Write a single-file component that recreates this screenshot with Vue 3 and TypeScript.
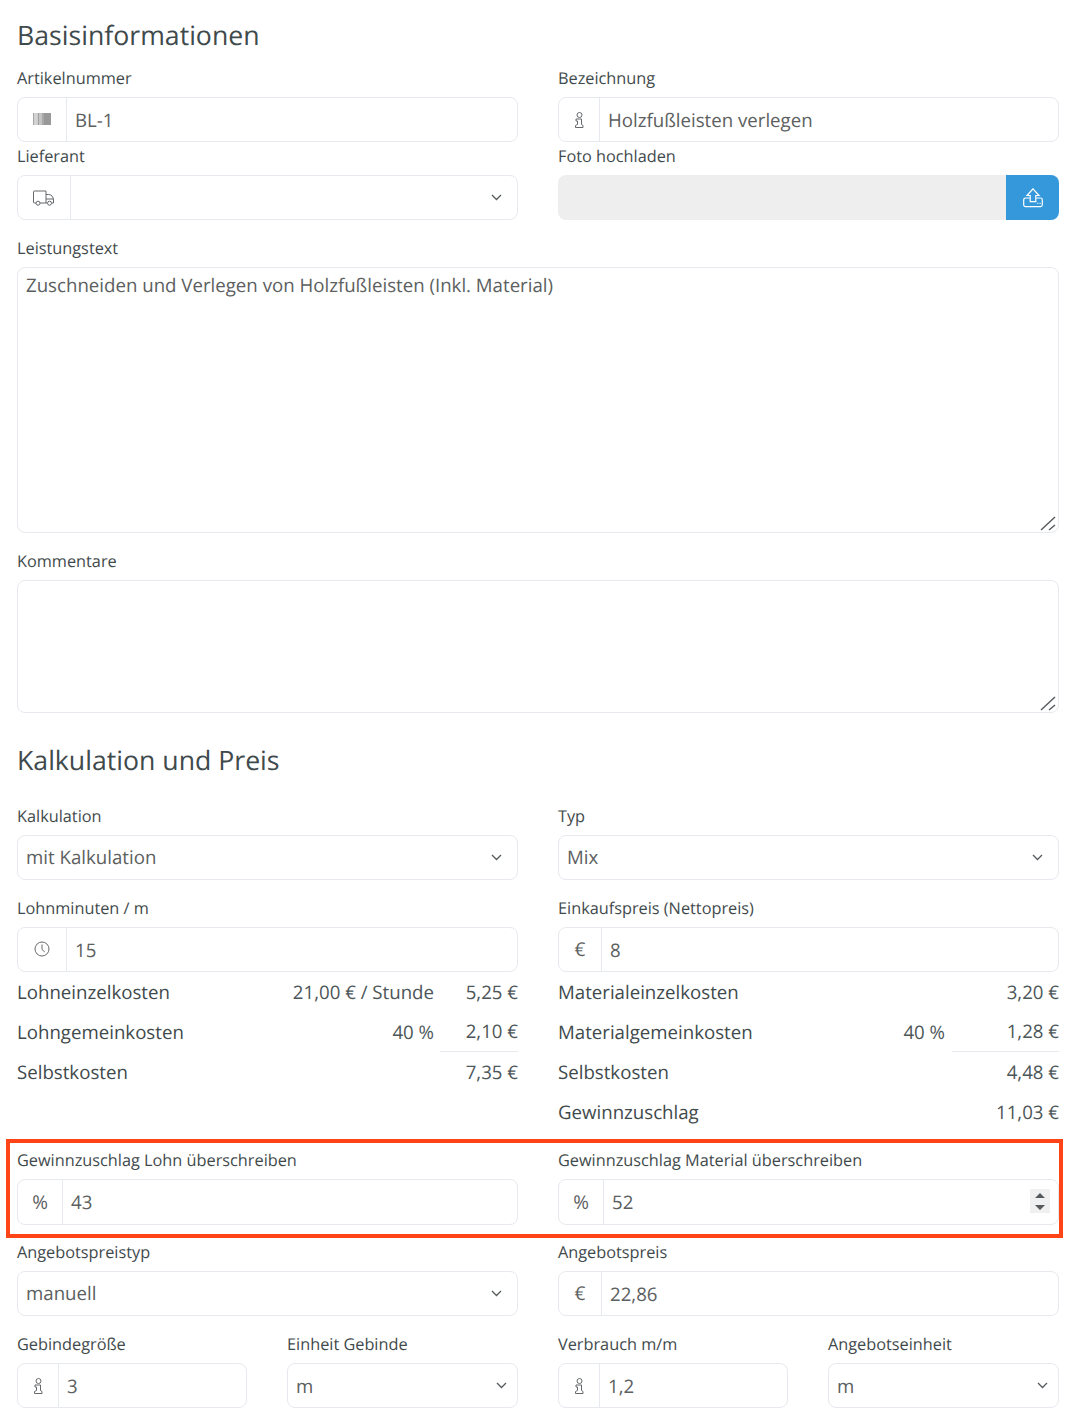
<script setup lang="ts">
const costL = [
  { l: 'Lohneinzelkosten', m: '21,00 € / Stunde', v: '5,25 €' },
  { l: 'Lohngemeinkosten', m: '40 %', v: '2,10 €', rule: true },
  { l: 'Selbstkosten', m: '', v: '7,35 €' },
]
const costR = [
  { l: 'Materialeinzelkosten', m: '', v: '3,20 €' },
  { l: 'Materialgemeinkosten', m: '40 %', v: '1,28 €', rule: true },
  { l: 'Selbstkosten', m: '', v: '4,48 €' },
  { l: 'Gewinnzuschlag', m: '', v: '11,03 €' },
]
</script>

<template>
  <main class="page">
    <h2 class="h1">Basisinformationen</h2>
    <div class="grid tight">
      <div class="field">
        <label>Artikelnummer</label>
        <div class="group">
          <span class="addon w49 up">
            <svg width="18" height="12" viewBox="0 0 18 12"><path fill="#a6a6a6" d="M0 0h1.500v12H0z"/><path fill="#d2d2d2" d="M2 0h2v12H2z"/><path fill="#a0a0a0" d="M4.500 0H6v12H4.500z"/><path fill="#c4c4c4" d="M6 0h3v12H6z"/><path fill="#a8a8a8" d="M9 0h2v12H9z"/><path fill="#989898" d="M11 0h7v12h-7z"/></svg>
          </span>
          <input value="BL-1" readonly />
        </div>
      </div>
      <div class="field">
        <label>Bezeichnung</label>
        <div class="group">
          <span class="addon w41">
            <svg width="9" height="16" viewBox="0 0 9 16" fill="none" stroke="#66696b" stroke-width="1"><circle cx="4.500" cy="3" r="2.500"/><path d="M1 7h5.500v5.500l1.500 1v2H.5v-2l2-1V9H1z"/></svg>
          </span>
          <input value="Holzfußleisten verlegen" readonly />
        </div>
      </div>
      <div class="field">
        <label>Lieferant</label>
        <div class="group">
          <span class="addon w53">
            <svg width="22" height="16" viewBox="0 0 22 16" fill="none" stroke="#66696b" stroke-width="1"><path d="M3 13H1.500A1 1 0 0 1 .5 12V2A1 1 0 0 1 1.500 1H13V13H7M13 4.500h2.500c3 0 5 2.500 5 5.500v3h-1.500M13 13h1M13 9h7.500"/><circle cx="5" cy="13.200" r="2"/><circle cx="16.500" cy="13.200" r="2"/></svg>
          </span>
          <input readonly />
          <svg class="chev" width="11" height="7" viewBox="0 0 11 7" fill="none" stroke="#555a5c" stroke-width="1.300"><path d="M1 1l4.500 4.500L10 1"/></svg>
        </div>
      </div>
      <div class="field">
        <label>Foto hochladen</label>
        <div class="upload">
          <span class="upload-fill"></span>
          <button type="button" class="upload-btn" aria-label="Foto hochladen">
            <svg width="20" height="20" viewBox="0 0 20 20" fill="none" stroke="#fff" stroke-width="1.200"><path d="M10 .8l6 6.700h-3.200v6.200H7.200V7.500H4zM6.500 10H2.500A1.800 1.800 0 0 0 .7 11.800v5A1.800 1.800 0 0 0 2.500 18.600h15a1.800 1.800 0 0 0 1.800-1.800v-5A1.800 1.800 0 0 0 17.500 10h-4M14.300 15.400h1M16.600 15.400h1"/></svg>
          </button>
        </div>
      </div>
    </div>

    <div class="field gap16">
      <label>Leistungstext</label>
      <div class="area-wrap tall">
        <textarea readonly>Zuschneiden und Verlegen von Holzfußleisten (Inkl. Material)</textarea>
        <svg class="grip" width="17" height="15" viewBox="0 0 17 15" stroke="#5a5d60" stroke-width="1.500"><path d="M1 14L15 1M9 14l6-5"/></svg>
      </div>
    </div>
    <div class="field gap16">
      <label>Kommentare</label>
      <div class="area-wrap short">
        <textarea readonly></textarea>
        <svg class="grip" width="17" height="15" viewBox="0 0 17 15" stroke="#5a5d60" stroke-width="1.500"><path d="M1 14L15 1M9 14l6-5"/></svg>
      </div>
    </div>

    <h2 class="h2">Kalkulation und Preis</h2>
    <div class="grid">
      <div class="field">
        <label>Kalkulation</label>
        <div class="group">
          <input class="sel" value="mit Kalkulation" readonly />
          <svg class="chev" width="11" height="7" viewBox="0 0 11 7" fill="none" stroke="#555a5c" stroke-width="1.300"><path d="M1 1l4.500 4.500L10 1"/></svg>
        </div>
      </div>
      <div class="field">
        <label>Typ</label>
        <div class="group">
          <input class="sel" value="Mix" readonly />
          <svg class="chev" width="11" height="7" viewBox="0 0 11 7" fill="none" stroke="#555a5c" stroke-width="1.300"><path d="M1 1l4.500 4.500L10 1"/></svg>
        </div>
      </div>
      <div class="field">
        <label>Lohnminuten / m</label>
        <div class="group">
          <span class="addon w49 up">
            <svg width="16" height="16" viewBox="0 0 16 16" fill="none" stroke="#66696b" stroke-width="1"><circle cx="8" cy="8" r="7"/><path d="M8 3.500V8.500l2.800 2.500"/></svg>
          </span>
          <input value="15" readonly />
        </div>
      </div>
      <div class="field">
        <label>Einkaufspreis (Nettopreis)</label>
        <div class="group">
          <span class="addon w43 txt">€</span>
          <input value="8" readonly />
        </div>
      </div>
    </div>

    <div class="costs">
      <div class="cost-col">
        <div v-for="r in costL" :key="r.l" class="cost">
          <span class="cost-l">{{ r.l }}</span>
          <span class="cost-m">{{ r.m }}</span>
          <span class="cost-v" :class="{ rule: r.rule }">{{ r.v }}</span>
        </div>
      </div>
      <div class="cost-col wide">
        <div v-for="r in costR" :key="r.l" class="cost">
          <span class="cost-l">{{ r.l }}</span>
          <span class="cost-m">{{ r.m }}</span>
          <span class="cost-v" :class="{ rule: r.rule }">{{ r.v }}</span>
        </div>
      </div>
    </div>

    <div class="override">
      <div class="redbox"></div>
      <div class="grid">
        <div class="field">
          <label>Gewinnzuschlag Lohn überschreiben</label>
          <div class="group h46">
            <span class="addon w45 txt">%</span>
            <input class="sel" value="43" readonly />
          </div>
        </div>
        <div class="field">
          <label>Gewinnzuschlag Material überschreiben</label>
          <div class="group h46">
            <span class="addon w45 txt">%</span>
            <input class="sel" value="52" readonly />
            <span class="spin">
              <svg width="10" height="17" viewBox="0 0 10 17" fill="#55595b"><path d="M5 0l5 5H0zM0 12h10l-5 5z"/></svg>
            </span>
          </div>
        </div>
      </div>
    </div>

    <div class="grid after">
      <div class="field">
        <label>Angebotspreistyp</label>
        <div class="group">
          <input class="sel" value="manuell" readonly />
          <svg class="chev" width="11" height="7" viewBox="0 0 11 7" fill="none" stroke="#555a5c" stroke-width="1.300"><path d="M1 1l4.500 4.500L10 1"/></svg>
        </div>
      </div>
      <div class="field">
        <label>Angebotspreis</label>
        <div class="group">
          <span class="addon w43 txt">€</span>
          <input value="22,86" readonly />
        </div>
      </div>
      <div class="grid nested">
        <div class="field">
          <label>Gebindegröße</label>
          <div class="group">
            <span class="addon w41">
              <svg width="9" height="16" viewBox="0 0 9 16" fill="none" stroke="#66696b" stroke-width="1"><circle cx="4.500" cy="3" r="2.500"/><path d="M1 7h5.500v5.500l1.500 1v2H.5v-2l2-1V9H1z"/></svg>
            </span>
            <input value="3" readonly />
          </div>
        </div>
        <div class="field">
          <label>Einheit Gebinde</label>
          <div class="group">
            <input value="m" readonly />
            <svg class="chev near" width="11" height="7" viewBox="0 0 11 7" fill="none" stroke="#555a5c" stroke-width="1.300"><path d="M1 1l4.500 4.500L10 1"/></svg>
          </div>
        </div>
      </div>
      <div class="grid nested">
        <div class="field">
          <label>Verbrauch m/m</label>
          <div class="group">
            <span class="addon w41">
              <svg width="9" height="16" viewBox="0 0 9 16" fill="none" stroke="#66696b" stroke-width="1"><circle cx="4.500" cy="3" r="2.500"/><path d="M1 7h5.500v5.500l1.500 1v2H.5v-2l2-1V9H1z"/></svg>
            </span>
            <input value="1,2" readonly />
          </div>
        </div>
        <div class="field">
          <label>Angebotseinheit</label>
          <div class="group">
            <input value="m" readonly />
            <svg class="chev near" width="11" height="7" viewBox="0 0 11 7" fill="none" stroke="#555a5c" stroke-width="1.300"><path d="M1 1l4.500 4.500L10 1"/></svg>
          </div>
        </div>
      </div>
    </div>
  </main>
</template>

<style scoped>
.page {
  box-sizing: border-box;
  width: 1078px;
  height: 1418px;
  padding: 0 19px 0 17px;
  overflow: hidden;
  background: #fff;
  color: #3f4a4c;
  font-family: "Open Sans", "Liberation Sans", sans-serif;
  text-rendering: geometricPrecision;
}
.h1, .h2 {
  margin: 0;
  font-size: 26.670px;
  font-weight: 400;
  line-height: 36px;
  color: #3f4a4c;
}
.h1 { padding: 17px 0 13px; }
.h2 { padding: 29px 0 26px; }
.grid {
  display: grid;
  grid-template-columns: 1fr 1fr;
  column-gap: 40px;
  row-gap: 16px;
}
.grid.tight { row-gap: 2px; }
.grid.nested { grid-template-columns: 230px 1fr; }
.gap16 { margin-top: 16px; }
.field { min-width: 0; }
label {
  display: block;
  height: 24px;
  margin-bottom: 7px;
  font-size: 16.300px;
  line-height: 24px;
}
.group {
  position: relative;
  display: flex;
  box-sizing: border-box;
  height: 45px;
  border: 1px solid #e6e9ed;
  border-radius: 8px;
  background: #fff;
}
.group.h46 { height: 46px; }
.addon {
  flex: none;
  display: flex;
  align-items: center;
  justify-content: center;
  box-sizing: border-box;
  border-right: 1px solid #e6e9ed;
}
.addon.up { padding-bottom: 2px; }
.addon.txt { padding-bottom: 2px; font-size: 19px; color: #5c6060; }
.h46 .addon.txt { padding-bottom: 0; }
.w41 { width: 41px; }
.w43 { width: 43px; }
.w45 { width: 45px; }
.w49 { width: 49px; }
.w53 { width: 53px; }
input, textarea {
  display: block;
  box-sizing: border-box;
  min-width: 0;
  width: 100%;
  border: 0;
  outline: 0;
  background: transparent;
  color: #5c6060;
  font: 400 18.670px/1.400 "Open Sans", "Liberation Sans", sans-serif;
  text-rendering: geometricPrecision;
}
input { flex: 1; padding: 4px 8px 0; }
input.sel { padding-top: 2px; }
.chev {
  position: absolute;
  right: 15px;
  top: 18px;
}
.chev.near { right: 10px; }
.upload {
  display: flex;
  height: 45px;
  border-radius: 8px;
  overflow: hidden;
}
.upload-fill { flex: 1; background: #eeeeee; }
.upload-btn {
  flex: none;
  display: flex;
  align-items: center;
  justify-content: center;
  width: 53px;
  padding: 0;
  border: 0;
  background: #3498db;
}
.area-wrap {
  position: relative;
  box-sizing: border-box;
  border: 1px solid #e6e9ed;
  border-radius: 8px;
}
.area-wrap.tall { height: 266px; }
.area-wrap.short { height: 133px; }
textarea {
  height: 100%;
  padding: 5px 8px;
  resize: none;
  overflow: hidden;
}
.grip {
  position: absolute;
  right: 1px;
  bottom: 1px;
}
.costs {
  display: grid;
  grid-template-columns: 1fr 1fr;
  column-gap: 40px;
}
.cost {
  display: flex;
  align-items: center;
  height: 40px;
  font-size: 18.670px;
}
.cost:nth-child(4) { height: 41px; }
.cost-l { flex: 1; }
.cost-m { margin-right: 6px; color: #4d5658; }
.wide .cost-m { margin-right: 7px; }
.cost-v {
  box-sizing: border-box;
  display: flex;
  align-items: center;
  justify-content: flex-end;
  width: 78px;
  height: 40px;
  color: #4d5658;
}
.wide .cost-v { width: 107px; }
.cost-v.rule { border-bottom: 1px solid #e6e9ed; }
.override {
  position: relative;
  margin-top: 15px;
}
.redbox {
  position: absolute;
  left: -11px;
  right: -4px;
  top: -9px;
  bottom: -13px;
  border: 4px solid #ff4517;
  pointer-events: none;
}
.spin {
  position: absolute;
  right: 8px;
  top: 9px;
  display: flex;
  align-items: center;
  justify-content: center;
  width: 20px;
  height: 24px;
  background: #f0f0f0;
}
.after { margin-top: 15px; }
</style>
